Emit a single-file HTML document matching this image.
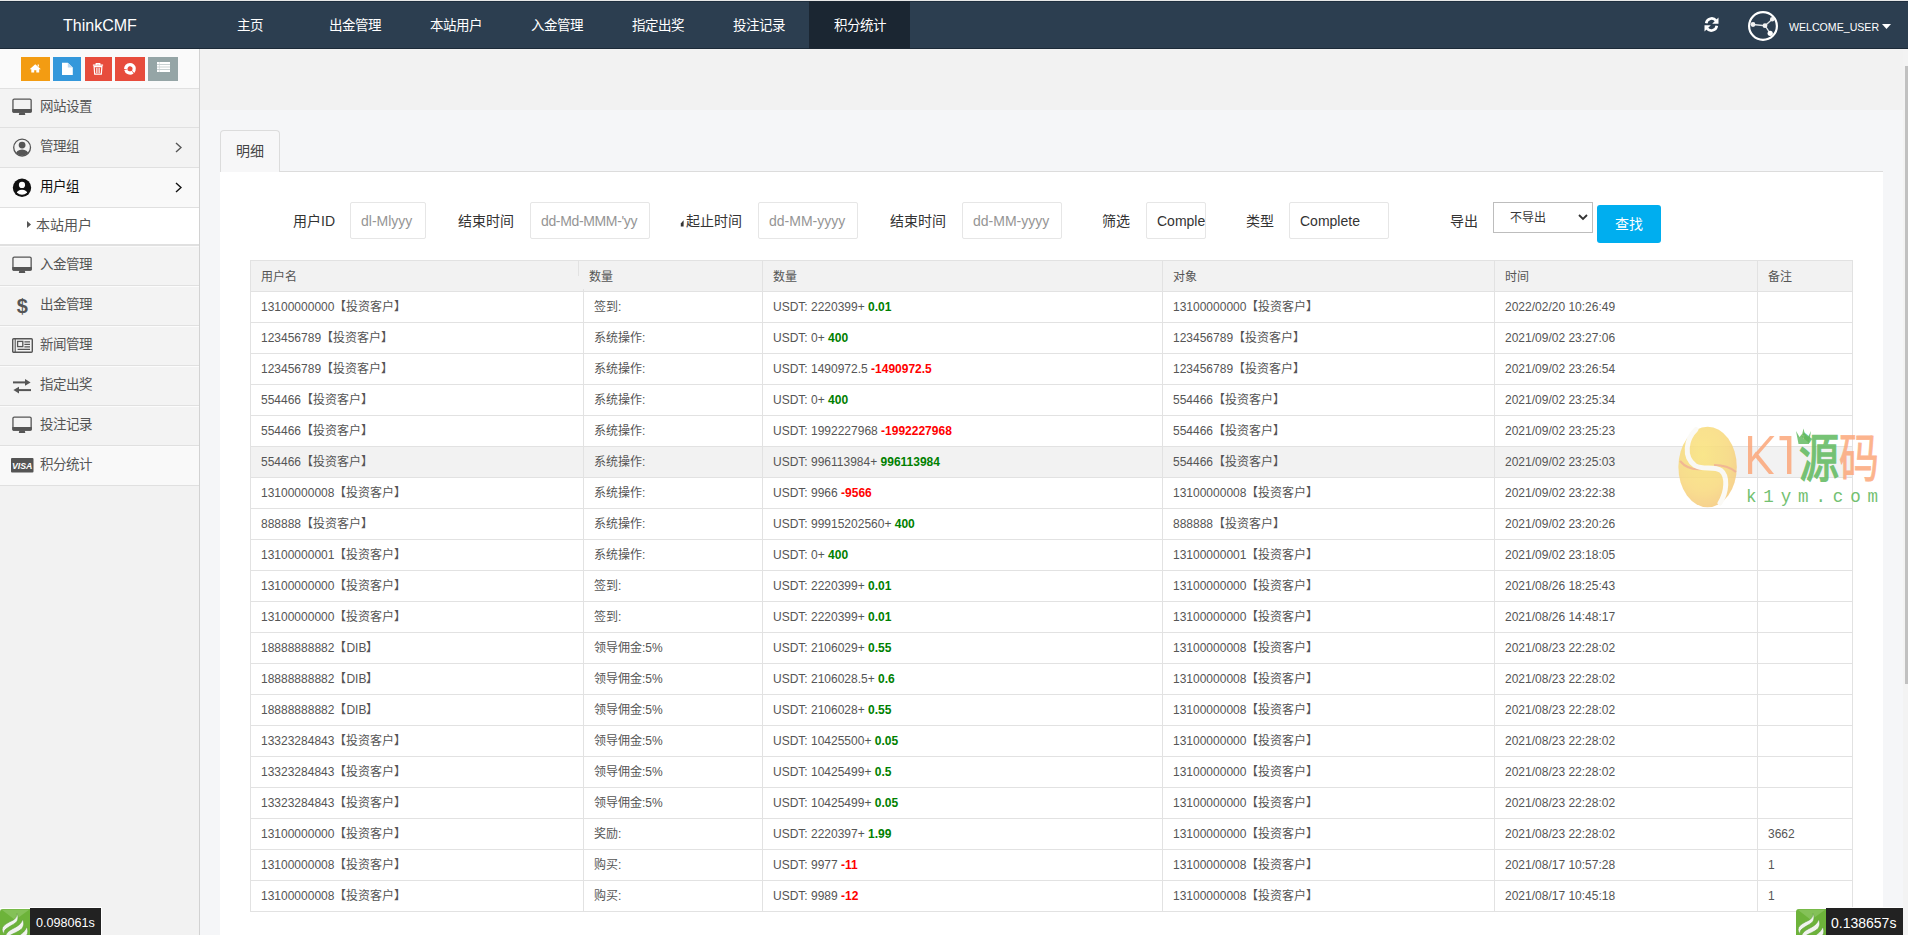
<!DOCTYPE html><html lang="zh-CN"><head><meta charset="utf-8"><title>ThinkCMF</title><style>
*{margin:0;padding:0;box-sizing:border-box}
html,body{width:1908px;height:935px;overflow:hidden;background:#f5f6f8}
body{font-family:"Liberation Sans",sans-serif;position:relative;color:#555}
.a{position:absolute;white-space:nowrap}
#top0{left:0;top:0;width:1908px;height:1px;background:#e8e8e8}
#nav{left:0;top:1px;width:1908px;height:48px;background:#2c3e50;border-top:1px solid #1f2f3f;border-bottom:1px solid #1c2a38}
.nt{color:#fff;font-size:13.5px;line-height:16px;top:18px}
#brand{color:#fff;font-size:16px;line-height:18px;left:63px;top:17px}
#navact{left:809px;top:1px;width:101px;height:48px;background:#1b2632}
#side{left:0;top:49px;width:199px;height:886px;background:#f2f2f2}
#sideline{left:199px;top:49px;width:1px;height:886px;background:#d2d2d2}
#btnarea{left:0;top:49px;width:199px;height:39px;background:#fafafa}
.sb{top:57px;height:24px}
.sep{left:0;width:199px;height:1px;background:#e0e0e0}
.si{left:0;width:199px;background:#f3f3f3}
.st{font-size:13.5px;line-height:16px;color:#555;left:40px}
#ctop{left:200px;top:49px;width:1708px;height:61px;background:#f2f2f2}
#tab{left:220px;top:130px;width:60px;height:42px;background:#f7f7f8;border:1px solid #dcdcdc;border-bottom:none;border-radius:4px 4px 0 0}
#tabline{left:279px;top:171px;width:1604px;height:1px;background:#dcdcdc}
#panel{left:220px;top:172px;width:1663px;height:763px;background:#fff}
.lbl{font-size:14px;line-height:16px;color:#333;top:213px}
.inp{top:202px;height:37px;border:1px solid #e6e6e6;border-radius:2px;background:#fff;overflow:hidden}
.ph{font-size:14px;line-height:16px;color:#959595;top:10px;left:10px}
.th{font-size:12px;line-height:14px;color:#555}
.td{font-size:12px;line-height:14px;color:#555}
.g{color:#008000;font-weight:bold}
.r{color:#ff0000;font-weight:bold}
.hl{background:#e4e4e4}
</style></head><body>
<div class="a" id="top0"></div>
<div class="a" id="nav"></div>
<div class="a" id="navact"></div>
<div class="a" id="brand">ThinkCMF</div>
<div class="a nt" style="left:237px">主页</div>
<div class="a nt" style="left:329px">出金管理</div>
<div class="a nt" style="left:430px">本站用户</div>
<div class="a nt" style="left:531px">入金管理</div>
<div class="a nt" style="left:632px">指定出奖</div>
<div class="a nt" style="left:733px">投注记录</div>
<div class="a nt" style="left:833.5px">积分统计</div>
<svg class="a" style="left:1703px;top:16px" width="17" height="17" viewBox="0 0 17 17"><path d="M3.2 7.2 A5.5 5.5 0 0 1 13 4.6" fill="none" stroke="#fff" stroke-width="2.6"/><path d="M15.5 1.5 L15.5 7.8 L9.2 7.8 Z" fill="#fff"/><path d="M13.8 9.8 A5.5 5.5 0 0 1 4 12.4" fill="none" stroke="#fff" stroke-width="2.6"/><path d="M1.5 15.5 L1.5 9.2 L7.8 9.2 Z" fill="#fff"/></svg>
<svg class="a" style="left:1747px;top:10px" width="32" height="32" viewBox="0 0 32 32"><circle cx="16" cy="16" r="13.9" fill="none" stroke="#fff" stroke-width="2.2"/><path d="M6 14.5 L18 15.7 L25.2 9.2 M18 15.7 L23.2 23.3" stroke="#dfe3e6" stroke-width="1.3" fill="none"/><circle cx="6" cy="14.5" r="2.4" fill="#f2f2f2"/><circle cx="18" cy="15.7" r="2.4" fill="#f2f2f2"/><circle cx="25.2" cy="9.2" r="2.2" fill="#f2f2f2"/><circle cx="23.2" cy="23.3" r="2.6" fill="#fff"/></svg>
<div class="a" style="left:1789px;top:21px;color:#fff;font-size:10.6px;line-height:12px">WELCOME_USER</div>
<svg class="a" style="left:1882px;top:24px" width="9" height="5" viewBox="0 0 9 5"><path d="M0 0H9L4.5 5Z" fill="#fff"/></svg>
<div class="a" id="side"></div>
<div class="a" id="btnarea"></div>
<div class="a sb" style="left:21px;width:29px;background:#f39c12"></div>
<svg class="a" style="left:28px;top:62px" width="15" height="14" viewBox="0 0 15 14"><path d="M7.25 2.2L12.9 7.3H11.2V10.6H8.3V8.2H6.2V10.6H3.3V7.3H1.6Z" fill="#fff"/><path d="M9.6 2.6H10.9V4.9L9.6 3.8Z" fill="#fff"/></svg>
<div class="a sb" style="left:53px;width:28px;background:#3498db"></div>
<svg class="a" style="left:60px;top:62px" width="15" height="14" viewBox="0 0 15 14"><path d="M2 0.7H7.8L12.8 5.4V13H2Z" fill="#fff"/><path d="M7.8 0.7V5.4H12.8" fill="#bcd9f1"/></svg>
<div class="a sb" style="left:85px;width:27px;background:#e74c3c"></div>
<svg class="a" style="left:91px;top:62px" width="15" height="14" viewBox="0 0 15 14"><path d="M1.9 3.2H12.1M5.2 3.2V1.6H8.8V3.2" stroke="#fff" stroke-width="1.2" fill="none"/><path d="M3.1 4.6H10.9L10.3 12.2H3.7Z" fill="none" stroke="#fff" stroke-width="1.2"/><path d="M5.6 5.8V11M7 5.8V11M8.4 5.8V11" stroke="#fff" stroke-width="0.8"/></svg>
<div class="a sb" style="left:115px;width:30px;background:#e74c3c"></div>
<svg class="a" style="left:123px;top:62px" width="15" height="14" viewBox="0 0 15 14"><circle cx="7" cy="6.8" r="4.2" fill="none" stroke="#fff" stroke-width="3.4" stroke-dasharray="8.2 0.6" transform="rotate(-70 7 6.8)"/><path d="M7 4.3L9.4 8.4H4.6Z" fill="#e74c3c"/></svg>
<div class="a sb" style="left:148px;width:30px;background:#95a5a6"></div>
<svg class="a" style="left:156px;top:62px" width="15" height="14" viewBox="0 0 15 14"><path d="M1 1.15H14M1 3.75H14M1 6.35H14M1 8.95H14" stroke="#fff" stroke-width="2.1"/><path d="M3.4 0V10.1" stroke="#c8d0d0" stroke-width="0.6"/></svg>
<div class="a si" style="top:89px;height:38px;background:#f3f3f3"></div>
<div class="a si" style="top:128px;height:39px;background:#f3f3f3"></div>
<div class="a si" style="top:168px;height:39px;background:#f9f9f9"></div>
<div class="a si" style="top:208px;height:36px;background:#ffffff"></div>
<div class="a si" style="top:246px;height:39px;background:#f3f3f3"></div>
<div class="a si" style="top:286px;height:39px;background:#f3f3f3"></div>
<div class="a si" style="top:326px;height:39px;background:#f3f3f3"></div>
<div class="a si" style="top:366px;height:39px;background:#f3f3f3"></div>
<div class="a si" style="top:406px;height:39px;background:#f3f3f3"></div>
<div class="a si" style="top:446px;height:39px;background:#f9f9f9"></div>
<div class="a sep" style="top:88px"></div>
<div class="a sep" style="top:127px"></div>
<div class="a sep" style="top:167px"></div>
<div class="a sep" style="top:207px"></div>
<div class="a sep" style="top:244px"></div>
<div class="a sep" style="top:245px"></div>
<div class="a sep" style="top:285px"></div>
<div class="a sep" style="top:325px"></div>
<div class="a sep" style="top:365px"></div>
<div class="a sep" style="top:405px"></div>
<div class="a sep" style="top:445px"></div>
<div class="a sep" style="top:485px"></div>
<div class="a sep" style="top:286px;background:#fbfbfb"></div>
<div class="a sep" style="top:326px;background:#fbfbfb"></div>
<div class="a sep" style="top:366px;background:#fbfbfb"></div>
<div class="a sep" style="top:406px;background:#fbfbfb"></div>
<div class="a sep" style="top:446px;background:#fbfbfb"></div>
<div class="a sep" style="top:246px;background:#fafafa"></div>
<div class="a st" style="top:99px;color:#555">网站设置</div>
<div class="a st" style="top:139px;color:#555">管理组</div>
<div class="a st" style="top:179px;color:#111">用户组</div>
<div class="a st" style="top:257px;color:#555">入金管理</div>
<div class="a st" style="top:297px;color:#555">出金管理</div>
<div class="a st" style="top:337px;color:#555">新闻管理</div>
<div class="a st" style="top:377px;color:#555">指定出奖</div>
<div class="a st" style="top:417px;color:#555">投注记录</div>
<div class="a st" style="top:457px;color:#555">积分统计</div>
<svg class="a" style="left:11px;top:97px" width="23" height="22" viewBox="0 0 23 22"><rect x="1.95" y="2.05" width="18.2" height="13" rx="1.3" fill="none" stroke="#555" stroke-width="1.3"/><path d="M1.3 12.1H20.8V14.4Q20.8 15.7 19.5 15.7H2.6Q1.3 15.7 1.3 14.4Z" fill="#555"/><path d="M8.3 15.7H13.8L14.3 17.9H7.8Z" fill="#555"/></svg>
<svg class="a" style="left:11px;top:137px" width="23" height="22" viewBox="0 0 23 22"><defs><clipPath id="c1"><circle cx="11.1" cy="10.6" r="8"/></clipPath></defs><circle cx="11.1" cy="10.6" r="8.4" fill="none" stroke="#555" stroke-width="1.3"/><circle cx="11.1" cy="8.1" r="3.4" fill="#555"/><ellipse cx="11.1" cy="17.6" rx="6.6" ry="5.2" fill="#555" clip-path="url(#c1)"/></svg>
<svg class="a" style="left:11px;top:177px" width="23" height="22" viewBox="0 0 23 22"><defs><clipPath id="c2"><circle cx="11" cy="10.7" r="7"/></clipPath></defs><circle cx="11" cy="10.7" r="9.2" fill="#111"/><circle cx="11" cy="7.9" r="3.1" fill="#fff"/><ellipse cx="11" cy="16.6" rx="5.6" ry="3.8" fill="#fff" clip-path="url(#c2)"/></svg>
<svg class="a" style="left:11px;top:255px" width="23" height="22" viewBox="0 0 23 22"><rect x="1.95" y="2.05" width="18.2" height="13" rx="1.3" fill="none" stroke="#555" stroke-width="1.3"/><path d="M1.3 12.1H20.8V14.4Q20.8 15.7 19.5 15.7H2.6Q1.3 15.7 1.3 14.4Z" fill="#555"/><path d="M8.3 15.7H13.8L14.3 17.9H7.8Z" fill="#555"/></svg>
<svg class="a" style="left:11px;top:294px" width="23" height="22" viewBox="0 0 23 22"><text x="11.2" y="19" font-family="Liberation Sans" font-weight="bold" font-size="20" fill="#555" text-anchor="middle">$</text></svg>
<svg class="a" style="left:11px;top:336px" width="23" height="22" viewBox="0 0 23 22"><rect x="1.7" y="2.7" width="19.6" height="13.6" rx="1" fill="none" stroke="#555" stroke-width="1.4"/><path d="M4.2 2.7V16.3" stroke="#555" stroke-width="1.1"/><rect x="6.6" y="5.4" width="5.2" height="5.2" fill="none" stroke="#555" stroke-width="1.3"/><path d="M13.4 5.9H19M13.4 8.4H19M13.4 10.9H19M6.6 13.4H19" stroke="#555" stroke-width="1.2"/></svg>
<svg class="a" style="left:11px;top:377px" width="23" height="22" viewBox="0 0 23 22"><path d="M2 4.4H15V6.4H2Z" fill="#555"/><path d="M14 2L19.6 5.4L14 8.8Z" fill="#555"/><path d="M7 12.1H20V14.1H7Z" fill="#555"/><path d="M8 9.7L2.4 13.1L8 16.5Z" fill="#555"/></svg>
<svg class="a" style="left:11px;top:415px" width="23" height="22" viewBox="0 0 23 22"><rect x="1.95" y="2.05" width="18.2" height="13" rx="1.3" fill="none" stroke="#555" stroke-width="1.3"/><path d="M1.3 12.1H20.8V14.4Q20.8 15.7 19.5 15.7H2.6Q1.3 15.7 1.3 14.4Z" fill="#555"/><path d="M8.3 15.7H13.8L14.3 17.9H7.8Z" fill="#555"/></svg>
<svg class="a" style="left:11px;top:456px" width="23" height="22" viewBox="0 0 23 22"><rect x="0" y="2" width="22.5" height="14.5" rx="1" fill="#555"/><text x="11.2" y="13.3" font-family="Liberation Sans" font-weight="bold" font-style="italic" font-size="8.8" fill="#fff" text-anchor="middle">VISA</text></svg>
<svg class="a" style="left:175px;top:142px" width="7" height="11" viewBox="0 0 7 11"><path d="M1 1L6 5.5L1 10" stroke="#555" stroke-width="1.4" fill="none"/></svg>
<svg class="a" style="left:175px;top:182px" width="7" height="11" viewBox="0 0 7 11"><path d="M1 1L6 5.5L1 10" stroke="#111" stroke-width="1.4" fill="none"/></svg>
<svg class="a" style="left:27px;top:221px" width="4" height="7" viewBox="0 0 4 7"><path d="M0 0L4 3.5L0 7Z" fill="#555"/></svg>
<div class="a st" style="left:36px;top:217px;color:#555;font-size:14px">本站用户</div>
<div class="a" id="sideline"></div>
<div class="a" id="ctop"></div>
<div class="a" id="panel"></div>
<div class="a" id="tab"></div>
<div class="a" id="tabline"></div>
<div class="a" style="left:236px;top:143px;font-size:14px;line-height:16px;color:#444">明细</div>
<div class="a lbl" style="left:293px">用户ID</div>
<div class="a inp" style="left:350px;width:76px"><div class="a ph">dl-Mlyyy</div></div>
<div class="a lbl" style="left:458px">结束时间</div>
<div class="a inp" style="left:530px;width:120px"><div class="a ph" style="letter-spacing:-0.35px">dd-Md-MMM-'yy</div></div>
<div class="a lbl" style="left:686px">起止时间</div>
<svg class="a" style="left:680px;top:219px" width="5" height="9" viewBox="0 0 5 9"><path d="M0.8 4.5L3.6 1.2V7.6H0.8Z" fill="#333"/></svg>
<div class="a inp" style="left:758px;width:100px"><div class="a ph">dd-MM-yyyy</div></div>
<div class="a lbl" style="left:890px">结束时间</div>
<div class="a inp" style="left:962px;width:100px"><div class="a ph">dd-MM-yyyy</div></div>
<div class="a lbl" style="left:1102px">筛选</div>
<div class="a inp" style="left:1146px;width:60px"><div class="a ph" style="color:#333">Complete</div></div>
<div class="a lbl" style="left:1246px">类型</div>
<div class="a inp" style="left:1289px;width:100px"><div class="a ph" style="color:#333">Complete</div></div>
<div class="a lbl" style="left:1450px">导出</div>
<div class="a" style="left:1493px;top:202px;width:100px;height:31px;border:1px solid #bdbdbd;background:#fff"></div>
<div class="a" style="left:1510px;top:211px;font-size:12px;line-height:14px;color:#3a3a3a">不导出</div>
<svg class="a" style="left:1578px;top:214px" width="10" height="7" viewBox="0 0 10 7"><path d="M1 1L5 5L9 1" stroke="#333" stroke-width="1.8" fill="none"/></svg>
<div class="a" style="left:1597px;top:205px;width:64px;height:38px;background:#00aeef;border-radius:3px"></div>
<div class="a" style="left:1615px;top:216px;font-size:14px;line-height:16px;color:#fff">查找</div>
<div class="a" style="left:250px;top:260px;width:1603px;height:31px;background:#f2f2f2"></div>
<div class="a" style="left:250px;top:447px;width:1602px;height:30px;background:#f2f2f2"></div>
<div class="a" style="left:250px;top:260px;width:1603px;height:1px;background:#e2e2e2"></div>
<div class="a" style="left:250px;top:291px;width:1603px;height:1px;background:#e2e2e2"></div>
<div class="a" style="left:250px;top:322px;width:1603px;height:1px;background:#e2e2e2"></div>
<div class="a" style="left:250px;top:353px;width:1603px;height:1px;background:#e2e2e2"></div>
<div class="a" style="left:250px;top:384px;width:1603px;height:1px;background:#e2e2e2"></div>
<div class="a" style="left:250px;top:415px;width:1603px;height:1px;background:#e2e2e2"></div>
<div class="a" style="left:250px;top:446px;width:1603px;height:1px;background:#e2e2e2"></div>
<div class="a" style="left:250px;top:477px;width:1603px;height:1px;background:#e2e2e2"></div>
<div class="a" style="left:250px;top:508px;width:1603px;height:1px;background:#e2e2e2"></div>
<div class="a" style="left:250px;top:539px;width:1603px;height:1px;background:#e2e2e2"></div>
<div class="a" style="left:250px;top:570px;width:1603px;height:1px;background:#e2e2e2"></div>
<div class="a" style="left:250px;top:601px;width:1603px;height:1px;background:#e2e2e2"></div>
<div class="a" style="left:250px;top:632px;width:1603px;height:1px;background:#e2e2e2"></div>
<div class="a" style="left:250px;top:663px;width:1603px;height:1px;background:#e2e2e2"></div>
<div class="a" style="left:250px;top:694px;width:1603px;height:1px;background:#e2e2e2"></div>
<div class="a" style="left:250px;top:725px;width:1603px;height:1px;background:#e2e2e2"></div>
<div class="a" style="left:250px;top:756px;width:1603px;height:1px;background:#e2e2e2"></div>
<div class="a" style="left:250px;top:787px;width:1603px;height:1px;background:#e2e2e2"></div>
<div class="a" style="left:250px;top:818px;width:1603px;height:1px;background:#e2e2e2"></div>
<div class="a" style="left:250px;top:849px;width:1603px;height:1px;background:#e2e2e2"></div>
<div class="a" style="left:250px;top:880px;width:1603px;height:1px;background:#e2e2e2"></div>
<div class="a" style="left:250px;top:911px;width:1603px;height:1px;background:#e2e2e2"></div>
<div class="a" style="left:250px;top:260px;width:1px;height:652px;background:#e2e2e2"></div>
<div class="a" style="left:1852px;top:260px;width:1px;height:652px;background:#e2e2e2"></div>
<div class="a" style="left:578px;top:261px;width:1px;height:15px;background:#e2e2e2"></div>
<div class="a" style="left:583px;top:289px;width:1px;height:622px;background:#e2e2e2"></div>
<div class="a" style="left:762px;top:260px;width:1px;height:651px;background:#e2e2e2"></div>
<div class="a" style="left:1162px;top:260px;width:1px;height:651px;background:#e2e2e2"></div>
<div class="a" style="left:1494px;top:260px;width:1px;height:651px;background:#e2e2e2"></div>
<div class="a" style="left:1757px;top:260px;width:1px;height:651px;background:#e2e2e2"></div>
<div class="a th" style="left:261px;top:270px">用户名</div>
<div class="a th" style="left:589px;top:270px">数量</div>
<div class="a th" style="left:773px;top:270px">数量</div>
<div class="a th" style="left:1173px;top:270px">对象</div>
<div class="a th" style="left:1505px;top:270px">时间</div>
<div class="a th" style="left:1768px;top:270px">备注</div>
<div class="a td" style="left:261px;top:300px">13100000000【投资客户】</div>
<div class="a td" style="left:594px;top:300px">签到:</div>
<div class="a td" style="left:773px;top:300px">USDT: 2220399+ <span class="g">0.01</span></div>
<div class="a td" style="left:1173px;top:300px">13100000000【投资客户】</div>
<div class="a td" style="left:1505px;top:300px">2022/02/20 10:26:49</div>
<div class="a td" style="left:261px;top:331px">123456789【投资客户】</div>
<div class="a td" style="left:594px;top:331px">系统操作:</div>
<div class="a td" style="left:773px;top:331px">USDT: 0+ <span class="g">400</span></div>
<div class="a td" style="left:1173px;top:331px">123456789【投资客户】</div>
<div class="a td" style="left:1505px;top:331px">2021/09/02 23:27:06</div>
<div class="a td" style="left:261px;top:362px">123456789【投资客户】</div>
<div class="a td" style="left:594px;top:362px">系统操作:</div>
<div class="a td" style="left:773px;top:362px">USDT: 1490972.5 <span class="r">-1490972.5</span></div>
<div class="a td" style="left:1173px;top:362px">123456789【投资客户】</div>
<div class="a td" style="left:1505px;top:362px">2021/09/02 23:26:54</div>
<div class="a td" style="left:261px;top:393px">554466【投资客户】</div>
<div class="a td" style="left:594px;top:393px">系统操作:</div>
<div class="a td" style="left:773px;top:393px">USDT: 0+ <span class="g">400</span></div>
<div class="a td" style="left:1173px;top:393px">554466【投资客户】</div>
<div class="a td" style="left:1505px;top:393px">2021/09/02 23:25:34</div>
<div class="a td" style="left:261px;top:424px">554466【投资客户】</div>
<div class="a td" style="left:594px;top:424px">系统操作:</div>
<div class="a td" style="left:773px;top:424px">USDT: 1992227968 <span class="r">-1992227968</span></div>
<div class="a td" style="left:1173px;top:424px">554466【投资客户】</div>
<div class="a td" style="left:1505px;top:424px">2021/09/02 23:25:23</div>
<div class="a td" style="left:261px;top:455px">554466【投资客户】</div>
<div class="a td" style="left:594px;top:455px">系统操作:</div>
<div class="a td" style="left:773px;top:455px">USDT: 996113984+ <span class="g">996113984</span></div>
<div class="a td" style="left:1173px;top:455px">554466【投资客户】</div>
<div class="a td" style="left:1505px;top:455px">2021/09/02 23:25:03</div>
<div class="a td" style="left:261px;top:486px">13100000008【投资客户】</div>
<div class="a td" style="left:594px;top:486px">系统操作:</div>
<div class="a td" style="left:773px;top:486px">USDT: 9966 <span class="r">-9566</span></div>
<div class="a td" style="left:1173px;top:486px">13100000008【投资客户】</div>
<div class="a td" style="left:1505px;top:486px">2021/09/02 23:22:38</div>
<div class="a td" style="left:261px;top:517px">888888【投资客户】</div>
<div class="a td" style="left:594px;top:517px">系统操作:</div>
<div class="a td" style="left:773px;top:517px">USDT: 99915202560+ <span class="g">400</span></div>
<div class="a td" style="left:1173px;top:517px">888888【投资客户】</div>
<div class="a td" style="left:1505px;top:517px">2021/09/02 23:20:26</div>
<div class="a td" style="left:261px;top:548px">13100000001【投资客户】</div>
<div class="a td" style="left:594px;top:548px">系统操作:</div>
<div class="a td" style="left:773px;top:548px">USDT: 0+ <span class="g">400</span></div>
<div class="a td" style="left:1173px;top:548px">13100000001【投资客户】</div>
<div class="a td" style="left:1505px;top:548px">2021/09/02 23:18:05</div>
<div class="a td" style="left:261px;top:579px">13100000000【投资客户】</div>
<div class="a td" style="left:594px;top:579px">签到:</div>
<div class="a td" style="left:773px;top:579px">USDT: 2220399+ <span class="g">0.01</span></div>
<div class="a td" style="left:1173px;top:579px">13100000000【投资客户】</div>
<div class="a td" style="left:1505px;top:579px">2021/08/26 18:25:43</div>
<div class="a td" style="left:261px;top:610px">13100000000【投资客户】</div>
<div class="a td" style="left:594px;top:610px">签到:</div>
<div class="a td" style="left:773px;top:610px">USDT: 2220399+ <span class="g">0.01</span></div>
<div class="a td" style="left:1173px;top:610px">13100000000【投资客户】</div>
<div class="a td" style="left:1505px;top:610px">2021/08/26 14:48:17</div>
<div class="a td" style="left:261px;top:641px">18888888882【DIB】</div>
<div class="a td" style="left:594px;top:641px">领导佣金:5%</div>
<div class="a td" style="left:773px;top:641px">USDT: 2106029+ <span class="g">0.55</span></div>
<div class="a td" style="left:1173px;top:641px">13100000008【投资客户】</div>
<div class="a td" style="left:1505px;top:641px">2021/08/23 22:28:02</div>
<div class="a td" style="left:261px;top:672px">18888888882【DIB】</div>
<div class="a td" style="left:594px;top:672px">领导佣金:5%</div>
<div class="a td" style="left:773px;top:672px">USDT: 2106028.5+ <span class="g">0.6</span></div>
<div class="a td" style="left:1173px;top:672px">13100000008【投资客户】</div>
<div class="a td" style="left:1505px;top:672px">2021/08/23 22:28:02</div>
<div class="a td" style="left:261px;top:703px">18888888882【DIB】</div>
<div class="a td" style="left:594px;top:703px">领导佣金:5%</div>
<div class="a td" style="left:773px;top:703px">USDT: 2106028+ <span class="g">0.55</span></div>
<div class="a td" style="left:1173px;top:703px">13100000008【投资客户】</div>
<div class="a td" style="left:1505px;top:703px">2021/08/23 22:28:02</div>
<div class="a td" style="left:261px;top:734px">13323284843【投资客户】</div>
<div class="a td" style="left:594px;top:734px">领导佣金:5%</div>
<div class="a td" style="left:773px;top:734px">USDT: 10425500+ <span class="g">0.05</span></div>
<div class="a td" style="left:1173px;top:734px">13100000000【投资客户】</div>
<div class="a td" style="left:1505px;top:734px">2021/08/23 22:28:02</div>
<div class="a td" style="left:261px;top:765px">13323284843【投资客户】</div>
<div class="a td" style="left:594px;top:765px">领导佣金:5%</div>
<div class="a td" style="left:773px;top:765px">USDT: 10425499+ <span class="g">0.5</span></div>
<div class="a td" style="left:1173px;top:765px">13100000000【投资客户】</div>
<div class="a td" style="left:1505px;top:765px">2021/08/23 22:28:02</div>
<div class="a td" style="left:261px;top:796px">13323284843【投资客户】</div>
<div class="a td" style="left:594px;top:796px">领导佣金:5%</div>
<div class="a td" style="left:773px;top:796px">USDT: 10425499+ <span class="g">0.05</span></div>
<div class="a td" style="left:1173px;top:796px">13100000000【投资客户】</div>
<div class="a td" style="left:1505px;top:796px">2021/08/23 22:28:02</div>
<div class="a td" style="left:261px;top:827px">13100000000【投资客户】</div>
<div class="a td" style="left:594px;top:827px">奖励:</div>
<div class="a td" style="left:773px;top:827px">USDT: 2220397+ <span class="g">1.99</span></div>
<div class="a td" style="left:1173px;top:827px">13100000000【投资客户】</div>
<div class="a td" style="left:1505px;top:827px">2021/08/23 22:28:02</div>
<div class="a td" style="left:1768px;top:827px">3662</div>
<div class="a td" style="left:261px;top:858px">13100000008【投资客户】</div>
<div class="a td" style="left:594px;top:858px">购买:</div>
<div class="a td" style="left:773px;top:858px">USDT: 9977 <span class="r">-11</span></div>
<div class="a td" style="left:1173px;top:858px">13100000008【投资客户】</div>
<div class="a td" style="left:1505px;top:858px">2021/08/17 10:57:28</div>
<div class="a td" style="left:1768px;top:858px">1</div>
<div class="a td" style="left:261px;top:889px">13100000008【投资客户】</div>
<div class="a td" style="left:594px;top:889px">购买:</div>
<div class="a td" style="left:773px;top:889px">USDT: 9989 <span class="r">-12</span></div>
<div class="a td" style="left:1173px;top:889px">13100000008【投资客户】</div>
<div class="a td" style="left:1505px;top:889px">2021/08/17 10:45:18</div>
<div class="a td" style="left:1768px;top:889px">1</div>
<div class="a" style="left:1903px;top:49px;width:5px;height:886px;background:#f3f3f3"></div>
<div class="a" style="left:1905px;top:66px;width:3px;height:618px;background:#c1c1c1"></div>
<svg class="a" style="left:1670px;top:420px" width="215" height="92" viewBox="0 0 215 92">
<defs><radialGradient id="eg" cx="0.42" cy="0.35" r="0.75"><stop offset="0" stop-color="#fbe47a"/><stop offset="0.6" stop-color="#f8d97c"/><stop offset="1" stop-color="#f4c47c"/></radialGradient></defs>
<g opacity="0.85"><ellipse cx="37.6" cy="47" rx="29.2" ry="40.2" fill="url(#eg)"/>
<path d="M10 41C16 48 24 50 32 49" stroke="#ee9a88" stroke-width="2.2" fill="none" opacity="0.7"/>
<path d="M44 45C52 45 60 47 66 52" stroke="#ee9a88" stroke-width="2.2" fill="none" opacity="0.7"/>
<path d="M26 9.5C16 19 13 37 25 45.5C33 50.5 44 45.5 51 50.5C58 56 57 72 50 83" stroke="#fbfaf5" stroke-width="5" fill="none" stroke-linecap="round"/></g>
<g fill="#fca77a" opacity="0.85">
<path d="M78 16H82.2V54H78Z"/><path d="M81 38L100 16H104.5L82 42Z"/><path d="M86 31.5L104 54H99L83.5 35Z"/>
<path d="M109.5 16H121.4V54H117V20.2H109.5Z"/>
</g>
<path d="M126 11L129.5 17L132 14L133.5 19L135 14L138 17L141 11L139 24H128.5Z" fill="#6dbf6b" opacity="0.9"/>
<path d="M133.5 8.5L135 15H132Z" fill="#6dbf6b" opacity="0.9"/>
<text x="129" y="57" font-family="Liberation Sans" font-size="52" fill="#5fb95d" stroke="#5fb95d" stroke-width="1.6" opacity="0.85" textLength="40" lengthAdjust="spacingAndGlyphs">源</text>
<text x="169" y="57" font-family="Liberation Sans" font-size="52" fill="#fca77a" stroke="#fca77a" stroke-width="0.8" opacity="0.85" textLength="40" lengthAdjust="spacingAndGlyphs">码</text>
<text x="76" y="82" font-family="Liberation Mono" font-size="17.5" fill="#6cbd6a" opacity="0.95" textLength="132" lengthAdjust="spacing">k1ym.com</text>
</svg>
<svg class="a" style="left:0;top:909px" width="30" height="26" viewBox="0 0 30 26"><path d="M0 3Q0 0 3 0H30V26H0Z" fill="#6db33a"/><path d="M1.5 0.5L15 11L29.5 0.5Z" fill="#84c158"/><g fill="#f1f3ef" stroke="#5d9e35" stroke-width="0.6"><path d="M16.9 4.5C18.5 7 18.5 11 16 13.5C13 16 7 18.5 5 21C4 22.5 4 24 4.5 25C2.5 24 1.5 21 2.5 18.5C4 15.5 9 13 12.5 11.5C15.5 10 17 7.5 16.9 4.5Z"/><path d="M22.5 10.5C24.5 13 24 18 21 20.5C18 23 13 24.5 10 26.5L5.5 26.5C7 23 10 21 13 19.5C17 17.5 21.5 15 22.5 10.5Z"/><path d="M26.6 18C28 20 28.5 24 26.5 26.5L19 26.5C22 24.5 25.5 22 26.6 18Z"/></g></svg>
<div class="a" style="left:0;top:908px;width:30px;height:1px;background:#fff"></div>
<div class="a" style="left:30px;top:907px;width:72px;height:28px;background:#222;border-top:1px solid #fff;border-right:1px solid #fff"></div>
<div class="a" style="left:36px;top:916px;color:#fff;font-size:12.6px;line-height:15px">0.098061s</div>
<svg class="a" style="left:1796px;top:909px" width="30" height="26" viewBox="0 0 30 26"><path d="M0 3Q0 0 3 0H30V26H0Z" fill="#6db33a"/><path d="M1.5 0.5L15 11L29.5 0.5Z" fill="#84c158"/><g fill="#f1f3ef" stroke="#5d9e35" stroke-width="0.6"><path d="M16.9 4.5C18.5 7 18.5 11 16 13.5C13 16 7 18.5 5 21C4 22.5 4 24 4.5 25C2.5 24 1.5 21 2.5 18.5C4 15.5 9 13 12.5 11.5C15.5 10 17 7.5 16.9 4.5Z"/><path d="M22.5 10.5C24.5 13 24 18 21 20.5C18 23 13 24.5 10 26.5L5.5 26.5C7 23 10 21 13 19.5C17 17.5 21.5 15 22.5 10.5Z"/><path d="M26.6 18C28 20 28.5 24 26.5 26.5L19 26.5C22 24.5 25.5 22 26.6 18Z"/></g></svg>
<div class="a" style="left:1796px;top:908px;width:30px;height:1px;background:#fff"></div>
<div class="a" style="left:1826px;top:907px;width:77px;height:28px;background:#222;border-top:1px solid #fff"></div>
<div class="a" style="left:1831px;top:915px;color:#fff;font-size:14px;line-height:16px">0.138657s</div>
</body></html>
